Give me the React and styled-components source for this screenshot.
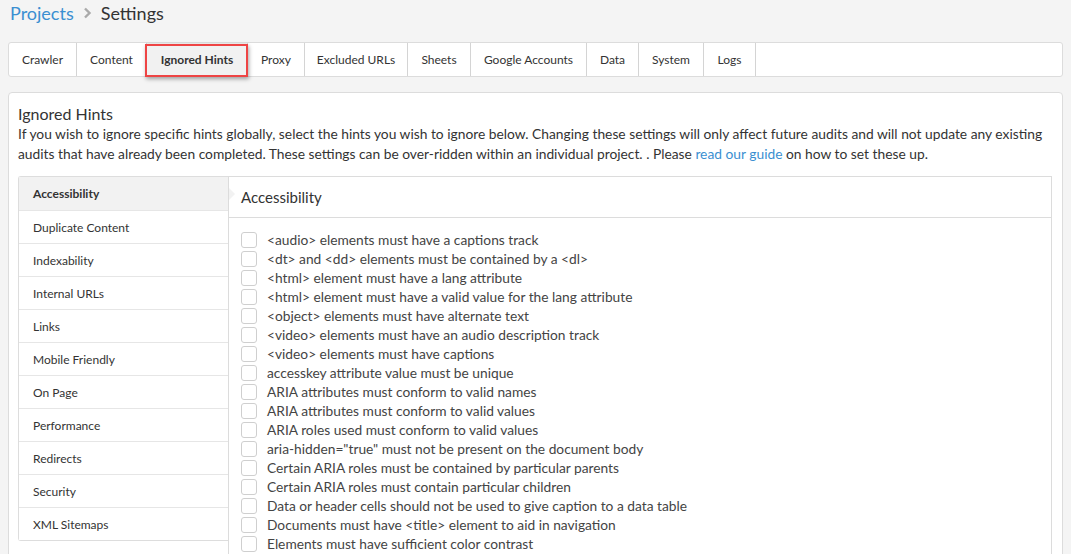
import React from "react";
import styled, { createGlobalStyle } from "styled-components";

const Global = createGlobalStyle`
  html, body { margin: 0; padding: 0; background: #f4f4f4; }
  body { font-family: Lato, "Open Sans", sans-serif; color: #333; }
  * { box-sizing: border-box; }
`;

const Page = styled.div`
  padding: 0 8px;
  height: 554px;
  overflow: hidden;
`;

const Breadcrumb = styled.div`
  display: flex;
  align-items: center;
  height: 25px;
  padding-left: 2px;
  font-size: 18px;
  gap: 9px;
`;

const Crumb = styled.a`
  color: #3b8fd1;
  text-decoration: none;
`;

const Current = styled.span`
  color: #333;
`;

const TabBar = styled.div`
  margin-top: 17px;
  display: flex;
  height: 35px;
  background: #fff;
  border: 1px solid #dcdcdc;
  border-radius: 3px;
`;

const Tab = styled.div`
  position: relative;
  display: flex;
  align-items: center;
  justify-content: center;
  flex: none;
  white-space: nowrap;
  font-size: 12px;
  border-right: 1px solid #d4d4d4;
  color: #333;
  font-weight: ${(p) => (p.$active ? 700 : 400)};
  background: ${(p) => (p.$active ? "#f1f1f1" : "transparent")};
  ${(p) =>
    p.$active &&
    `
    &::after {
      content: "";
      position: absolute;
      left: -2px; right: -1px; top: 1px; bottom: -1px;
      border: 2px solid #ee4444;
      box-shadow: 1px 2px 4px rgba(0,0,0,0.35);
      pointer-events: none;
    }
  `}
`;

const Panel = styled.div`
  margin-top: 15px;
  background: #fff;
  border: 1px solid #dcdcdc;
  border-radius: 4px;
  padding: 11px 10px 0 9px;
  height: 600px;
`;

const Title = styled.div`
  font-size: 16px;
  line-height: 20px;
  color: #333;
`;

const Intro = styled.p`
  margin: 0;
  font-size: 13.8px;
  line-height: 20px;
  color: #333;
`;

const Link = styled.a`
  color: #3b8fd1;
  text-decoration: none;
`;

const Body = styled.div`
  margin-top: 12px;
  display: flex;
  align-items: flex-start;
`;

const Sidebar = styled.div`
  width: 210px;
  flex: none;
  border: 1px solid #dddddd;
  border-right: none;
  border-radius: 3px 0 0 3px;
  background: #fff;
`;

const SideItem = styled.div`
  position: relative;
  height: 33px;
  display: flex;
  align-items: center;
  padding-left: 14px;
  font-size: 12px;
  color: #333;
  border-top: ${(p) => (p.$first ? "none" : "1px solid #e6e6e6")};
  font-weight: ${(p) => (p.$active ? 700 : 400)};
  background: ${(p) => (p.$active ? "#f2f2f2" : "#fff")};
  ${(p) =>
    p.$active &&
    `
    &::after {
      content: "";
      position: absolute;
      right: -7px; top: 11px;
      width: 0; height: 0;
      border-top: 6px solid transparent;
      border-bottom: 6px solid transparent;
      border-left: 6px solid #f2f2f2;
      z-index: 2;
    }
  `}
`;

const Content = styled.div`
  flex: 1;
  border: 1px solid #dcdcdc;
  height: 420px;
`;

const ContentHead = styled.div`
  height: 41px;
  display: flex;
  align-items: center;
  padding-left: 12px;
  font-size: 15px;
  color: #333;
  border-bottom: 1px solid #dcdcdc;
`;

const List = styled.div`
  padding: 12px 0 0 12px;
  display: flex;
  flex-direction: column;
`;

const Row = styled.label`
  display: flex;
  align-items: center;
  height: 19px;
  font-size: 13.75px;
  color: #444;
  white-space: nowrap;
`;

const Box = styled.span`
  width: 16px;
  height: 16px;
  border: 1px solid #cfcfcf;
  border-radius: 3px;
  margin-right: 10px;
  flex: none;
  background: #fff;
`;

const tabs = [
  ["Crawler", 68],
  ["Content", 70],
  ["Ignored Hints", 101],
  ["Proxy", 57],
  ["Excluded URLs", 103],
  ["Sheets", 63],
  ["Google Accounts", 116],
  ["Data", 52],
  ["System", 65],
  ["Logs", 52],
];

const sides = [
  "Accessibility",
  "Duplicate Content",
  "Indexability",
  "Internal URLs",
  "Links",
  "Mobile Friendly",
  "On Page",
  "Performance",
  "Redirects",
  "Security",
  "XML Sitemaps",
];

const hints = [
  "<audio> elements must have a captions track",
  "<dt> and <dd> elements must be contained by a <dl>",
  "<html> element must have a lang attribute",
  "<html> element must have a valid value for the lang attribute",
  "<object> elements must have alternate text",
  "<video> elements must have an audio description track",
  "<video> elements must have captions",
  "accesskey attribute value must be unique",
  "ARIA attributes must conform to valid names",
  "ARIA attributes must conform to valid values",
  "ARIA roles used must conform to valid values",
  'aria-hidden="true" must not be present on the document body',
  "Certain ARIA roles must be contained by particular parents",
  "Certain ARIA roles must contain particular children",
  "Data or header cells should not be used to give caption to a data table",
  "Documents must have <title> element to aid in navigation",
  "Elements must have sufficient color contrast",
];

const Chevron = () => (
  <svg width="9" height="12" viewBox="0 0 9 12">
    <path d="M2 1.5 L6.5 6 L2 10.5" fill="none" stroke="#aaa" strokeWidth="2.4" />
  </svg>
);

export default function App() {
  return (
    <>
      <Global />
      <Page>
        <Breadcrumb>
          <Crumb href="#">Projects</Crumb>
          <Chevron />
          <Current>Settings</Current>
        </Breadcrumb>
        <TabBar>
          {tabs.map(([t, w]) => (
            <Tab key={t} $active={t === "Ignored Hints"} style={{ width: w }}>
              {t}
            </Tab>
          ))}
        </TabBar>
        <Panel>
          <Title>Ignored Hints</Title>
          <Intro>
            If you wish to ignore specific hints globally, select the hints you wish to ignore below.
            Changing these settings will only affect future audits and will not update any existing
            audits that have already been completed. These settings can be over-ridden within an
            individual project. . Please <Link href="#">read our guide</Link> on how to set these up.
          </Intro>
          <Body>
            <Sidebar>
              {sides.map((s, i) => (
                <SideItem key={s} $first={i === 0} $active={i === 0}>
                  {s}
                </SideItem>
              ))}
            </Sidebar>
            <Content>
              <ContentHead>Accessibility</ContentHead>
              <List>
                {hints.map((h) => (
                  <Row key={h}>
                    <Box />
                    {h}
                  </Row>
                ))}
              </List>
            </Content>
          </Body>
        </Panel>
      </Page>
    </>
  );
}
